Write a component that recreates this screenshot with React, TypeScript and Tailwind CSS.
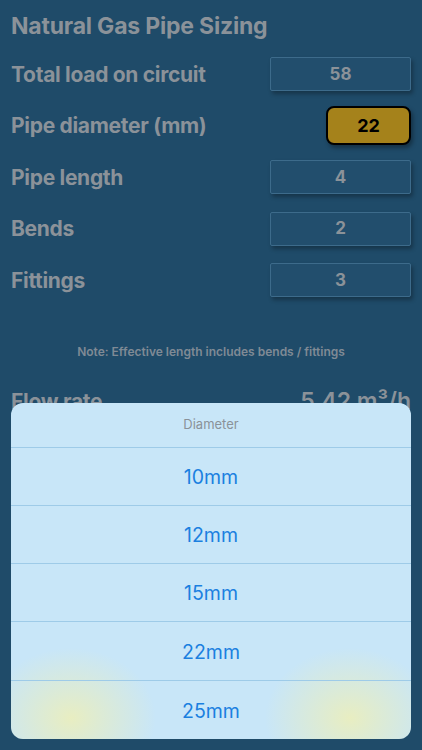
import React from "react";

const rows = [
  { label: "Total load on circuit", value: "58" },
  { label: "Pipe diameter (mm)", value: "22", active: true },
  { label: "Pipe length", value: "4" },
  { label: "Bends", value: "2" },
  { label: "Fittings", value: "3" },
];

const options = ["10mm", "12mm", "15mm", "22mm", "25mm"];

export default function App() {
  return (
    <div
      className="relative w-[422px] h-[750px] overflow-hidden bg-[#1f4b69]"
      style={{ fontFamily: "Inter, 'Noto Sans', sans-serif" }}
    >
      <div className="px-[11px]">
        <div className="h-[48.5px] pt-[12px]">
          <h1 className="text-[23px] leading-[28px] font-bold text-[#8b9299] tracking-[-0.2px]">
            Natural Gas Pipe Sizing
          </h1>
        </div>
        {rows.map((r) => (
          <div key={r.label} className="h-[51.5px] flex items-center justify-between">
            <span className="text-[21px] font-bold text-[#8b9299] tracking-[-0.3px]">{r.label}</span>
            {r.active ? (
              <div className="w-[85px] h-[39px] rounded-[8px] border-2 border-black bg-[#a5821b] flex items-center justify-center shadow-[2px_3px_4px_rgba(0,0,0,0.35)]">
                <span className="text-[18px] font-bold text-black">{r.value}</span>
              </div>
            ) : (
              <div className="w-[141px] h-[34px] rounded-[2px] border-[1.5px] border-[#3d6b8b] bg-[#224e6d] flex items-center justify-center shadow-[2px_3px_4px_rgba(0,0,0,0.3)]">
                <span className="text-[17px] font-bold text-[#8b9299]">{r.value}</span>
              </div>
            )}
          </div>
        ))}
        <div className="mt-[37px] text-center text-[12px] font-semibold text-[#7f8a95]">
          Note: Effective length includes bends / fittings
        </div>
        <div className="mt-[23px] flex items-center justify-between">
          <span className="text-[21px] font-bold text-[#8b9299] tracking-[-0.3px]">Flow rate</span>
          <span className="text-[23px] font-semibold text-[#8b9299]">5.42 m³/h</span>
        </div>
      </div>

      <div className="absolute left-[11px] top-[403px] w-[400px] h-[336px] rounded-[12px] overflow-hidden bg-[#c8e6f8] flex flex-col">
        <div className="absolute left-[-25px] top-[245px] w-[170px] h-[140px] rounded-full bg-[radial-gradient(closest-side,rgba(234,238,190,0.95),rgba(234,238,190,0))]" />
        <div className="absolute left-[254px] top-[245px] w-[170px] h-[140px] rounded-full bg-[radial-gradient(closest-side,rgba(234,238,190,0.95),rgba(234,238,190,0))]" />
        <div className="relative h-[44.5px] flex items-center justify-center border-b border-[#9ecbe8]">
          <span className="text-[13px] text-[#8a9299]">Diameter</span>
        </div>
        {options.map((o, i) => (
          <div
            key={o}
            className={
              "relative h-[58.3px] flex items-center justify-center " +
              (i < options.length - 1 ? "border-b border-[#9ecbe8]" : "")
            }
          >
            <span className="text-[19.5px] text-[#1b80e0] leading-none pt-[3px]">{o}</span>
          </div>
        ))}
      </div>
    </div>
  );
}
